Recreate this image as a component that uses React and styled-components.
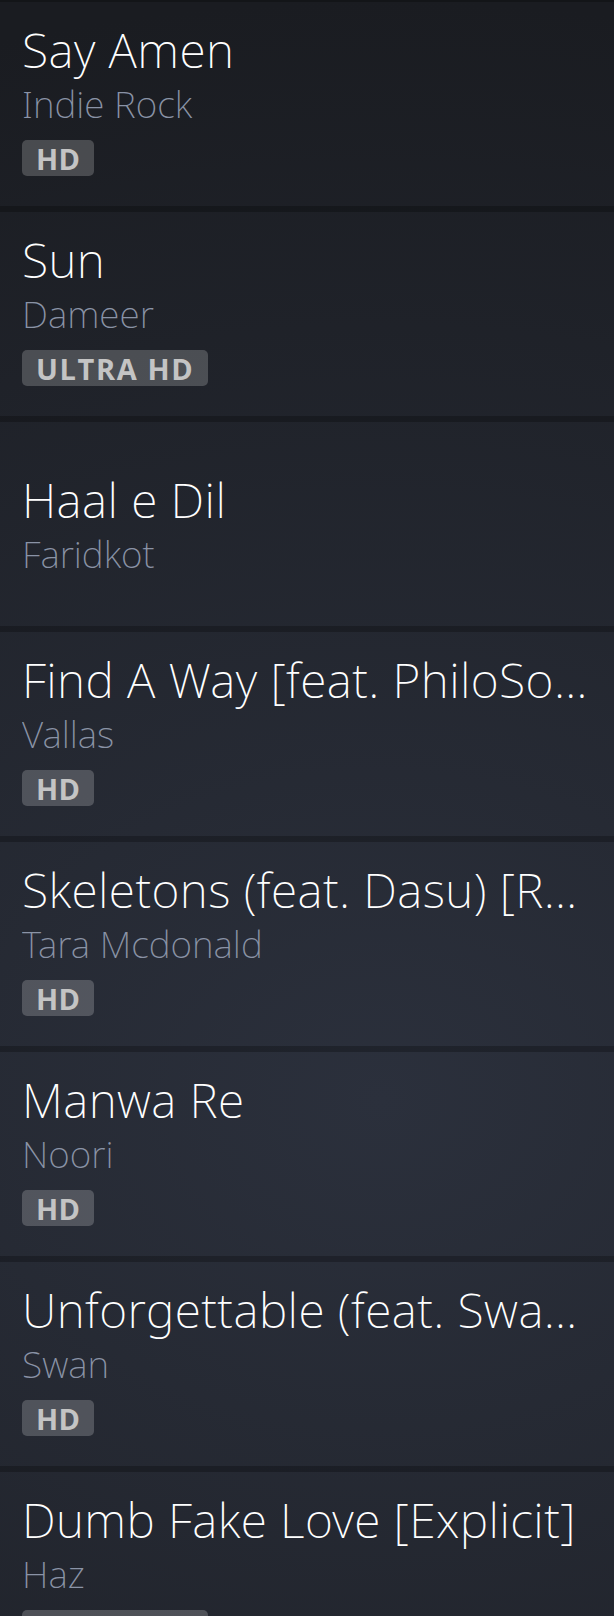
import React from "react";
import styled, { createGlobalStyle } from "styled-components";

const GlobalStyle = createGlobalStyle`
  html, body {
    margin: 0;
    padding: 0;
    background: #1a1c21;
  }
  * {
    box-sizing: border-box;
  }
`;

const Page = styled.div`
  min-height: 1616px;
  background: radial-gradient(
    1400px 1100px at 62% 1100px,
    #2b303c 0%,
    #1a1c21 100%
  );
  font-family: "Noto Sans", "Open Sans", sans-serif;
`;

const TrackList = styled.ul`
  list-style: none;
  margin: 0;
  padding: 0;
  border-top: 2px solid rgba(0, 0, 0, 0.25);
`;

const TrackRow = styled.li`
  height: 210px;
  display: flex;
  flex-direction: column;
  justify-content: center;
  padding: ${(props) => (props.$bare ? "24px 21px 24px 22px" : "18px 21px 30px 22px")};
  border-bottom: 6px solid rgba(0, 0, 0, 0.25);
`;

const Title = styled.div`
  font-size: 48px;
  font-weight: 200;
  line-height: 60px;
  letter-spacing: 0.4px;
  color: #ffffff;
  white-space: nowrap;
  overflow-x: clip;
  overflow-y: visible;
  text-overflow: ellipsis;
`;

const Artist = styled.div`
  font-size: 37px;
  font-weight: 200;
  line-height: 48px;
  color: #8a93a6;
  white-space: nowrap;
  overflow-x: clip;
  overflow-y: visible;
  text-overflow: ellipsis;
`;

const Badge = styled.span`
  align-self: flex-start;
  margin-top: 12px;
  height: 36px;
  padding: 0 14px;
  display: inline-flex;
  align-items: center;
  border-radius: 5px;
  background: rgba(255, 255, 255, 0.2);
  color: #c4c4c4;
  font-family: "Open Sans", "Noto Sans", sans-serif;
  font-size: 29px;
  font-weight: 700;
  letter-spacing: ${(props) => (props.$wide ? "1.6px" : "0.4px")};
`;

const tracks = [
  { title: "Say Amen", artist: "Indie Rock", quality: "HD" },
  { title: "Sun", artist: "Dameer", quality: "ULTRA HD" },
  { title: "Haal e Dil", artist: "Faridkot" },
  {
    title: "Find A Way [feat. PhiloSofa] [Radio Edit]",
    artist: "Vallas",
    quality: "HD",
  },
  {
    title: "Skeletons (feat. Dasu) [Remix]",
    artist: "Tara Mcdonald",
    quality: "HD",
  },
  { title: "Manwa Re", artist: "Noori", quality: "HD" },
  {
    title: "Unforgettable (feat. Swae Lee)",
    artist: "Swan",
    quality: "HD",
  },
  {
    title: "Dumb Fake Love [Explicit]",
    artist: "Haz",
    quality: "ULTRA HD",
  },
];

const App = () => {
  return (
    <Page>
      <GlobalStyle />
      <TrackList>
        {tracks.map((track) => (
          <TrackRow key={track.title} $bare={!track.quality}>
            <Title>{track.title}</Title>
            <Artist>{track.artist}</Artist>
            {track.quality && (
              <Badge $wide={track.quality.length > 2}>{track.quality}</Badge>
            )}
          </TrackRow>
        ))}
      </TrackList>
    </Page>
  );
};

export default App;
